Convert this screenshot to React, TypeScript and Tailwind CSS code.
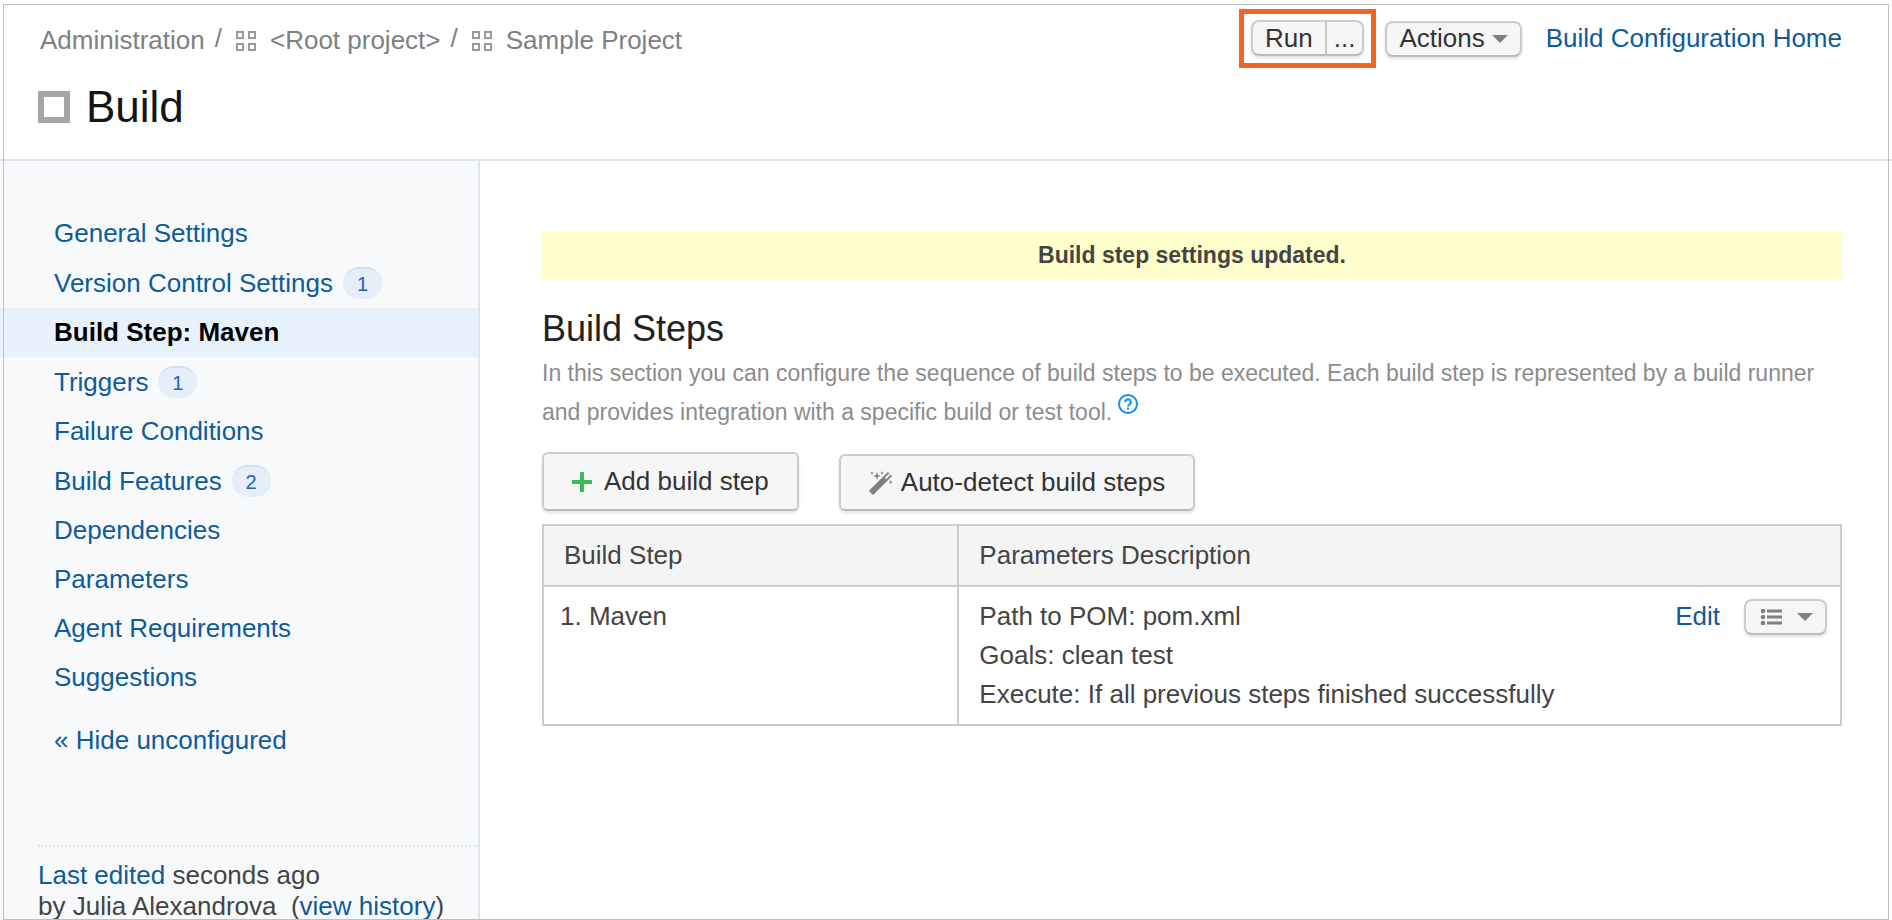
import type { ReactNode } from "react";
import clsx from "clsx";

type NavItem = { label: string; count?: number; active?: boolean };

const navItems: NavItem[] = [
  { label: "General Settings" },
  { label: "Version Control Settings", count: 1 },
  { label: "Build Step: Maven", active: true },
  { label: "Triggers", count: 1 },
  { label: "Failure Conditions" },
  { label: "Build Features", count: 2 },
  { label: "Dependencies" },
  { label: "Parameters" },
  { label: "Agent Requirements" },
  { label: "Suggestions" },
];

const ProjectIcon = () => (
  <svg className="h-5 w-5" viewBox="0 0 20 20" fill="none" stroke="#999" strokeWidth="2" aria-hidden="true">
    <rect x="1" y="1" width="6" height="6" />
    <rect x="13" y="1" width="6" height="6" />
    <rect x="1" y="13" width="6" height="6" />
    <rect x="13" y="13" width="6" height="6" />
  </svg>
);

const Caret = () => (
  <svg className="h-2 w-4" viewBox="0 0 16 8" aria-hidden="true">
    <path d="M0 0h16L8 8z" fill="#808080" />
  </svg>
);

const PlusIcon = () => (
  <svg className="h-5 w-5" viewBox="0 0 20 20" aria-hidden="true">
    <path d="M8 0h4v8h8v4h-8v8H8v-8H0V8h8z" fill="#3cb95d" />
  </svg>
);

const WandIcon = () => (
  <svg className="h-6 w-6" viewBox="0 0 24 24" aria-hidden="true">
    <path d="M2 22 21 3" stroke="#808080" strokeWidth="6" />
    <path d="M17.2 6.8 20.4 3.6" stroke="#f6f6f6" strokeWidth="2" strokeLinecap="round" />
    <path
      d="M8 1l1 3 3 1-3 1-1 3-1-3-3-1 3-1zM3 0l.6 1.4L5 2l-1.4.6L3 4l-.6-1.4L1 2l1.4-.6zM13 0l.6 1.4L15 2l-1.4.6L13 4l-.6-1.4L11 2l1.4-.6zM21.8 9.2l.6 1.4 1.4.6-1.4.6-.6 1.4-.6-1.4-1.4-.6 1.4-.6z"
      fill="#808080"
    />
  </svg>
);

const ListIcon = () => (
  <svg className="h-4 w-[22px]" viewBox="0 0 22 16" fill="#808080" aria-hidden="true">
    <circle cx="3" cy="2" r="2.3" />
    <circle cx="3" cy="8" r="2.3" />
    <circle cx="3" cy="14" r="2.3" />
    <path d="M7 .5h15v3H7zM7 6.5h15v3H7zM7 12.5h15v3H7z" />
  </svg>
);

const HelpIcon = () => (
  <svg
    className="mb-1.5 inline h-5 w-5 align-baseline"
    viewBox="0 0 20 20"
    fill="none"
    stroke="#0a8fff"
    strokeWidth="2"
    aria-hidden="true"
  >
    <circle cx="10" cy="10" r="9" />
    <path d="M7.2 8.2a2.8 2.8 0 1 1 4.2 2.4c-.9.5-1.4.9-1.4 1.8" />
    <path d="M10 13.6v2" />
  </svg>
);

const buttonLook =
  "flex items-center border-2 border-[#ccc] border-b-[#bbb] bg-[#f6f6f6] text-[#333] shadow-[0_2px_3px_rgba(0,0,0,0.12)]";

const Button = ({ className, children, label }: { className?: string; children: ReactNode; label?: string }) => (
  <button type="button" aria-label={label} className={clsx(buttonLook, className)}>
    {children}
  </button>
);

const Header = () => (
  <header className="flex justify-between border-b-2 border-[#dfe5eb] pr-[50px]">
    <div className="pt-[23px] pb-[27px] pl-[38px]">
      <nav aria-label="Breadcrumb" className="flex items-center pl-0.5 text-[#808080]">
        <a href="#admin">Administration</a>
        <span className="px-2.5 pb-1">/</span>
        <a href="#root" className="flex items-center gap-3.5 pl-1">
          <ProjectIcon />
          &lt;Root project&gt;
        </a>
        <span className="px-2.5 pb-1">/</span>
        <a href="#sample" className="flex items-center gap-3.5 pl-1">
          <ProjectIcon />
          Sample Project
        </a>
      </nav>
      <h1 className="mt-6 flex items-center gap-4 text-[44px] leading-[50px] text-[#151515]">
        <span className="h-8 w-8 border-6 border-[#a6a6a6]" />
        Build
      </h1>
    </div>
    <div className="flex items-center self-start pt-[9px]">
      <div className="flex border-5 border-[#f26522] px-[7px] pt-1.5 pb-[7px]">
        <Button className="h-9 rounded-l-lg px-3">Run</Button>
        <Button className="h-9 rounded-r-lg border-l-0 px-[7px]" label="Run custom build">
          ...
        </Button>
      </div>
      <Button className="ml-[9px] h-9 gap-[7px] rounded-lg px-3">
        Actions
        <Caret />
      </Button>
      <a href="#home" className="ml-6 text-[#0f5b99]">
        Build Configuration Home
      </a>
    </div>
  </header>
);

const Sidebar = () => (
  <aside className="w-[480px] shrink-0 border-r-2 border-[#dfe5eb] bg-[#f7f9fb] pt-12">
    <ul>
      {navItems.map(({ label, count, active }) => (
        <li key={label}>
          <a
            href="#settings"
            className={clsx(
              "flex items-center gap-2.5 py-[9px] pl-[54px]",
              active ? "bg-[#e7f2fd] font-bold text-black" : "text-[#0f5b99]"
            )}
          >
            {label}
            {count && (
              <span className="flex h-8 w-[39px] items-center justify-center rounded-full border-t-2 border-[#cfdff5] bg-[#e5eef9] text-xl text-[#2160c8]">
                {count}
              </span>
            )}
          </a>
        </li>
      ))}
    </ul>
    <a href="#hide" className="mt-3.5 block py-[9px] pl-[54px] text-[#0f5b99]">
      « Hide unconfigured
    </a>
    <div className="mt-20 ml-[38px] border-t-2 border-dotted border-[#dfe5eb] pt-[13px]">
      <p className="whitespace-nowrap">
        <a href="#edited" className="text-[#0f5b99]">Last edited</a> seconds ago
        <br />
        by Julia Alexandrova&nbsp; (<a href="#history" className="text-[#0f5b99]">view history</a>)
      </p>
    </div>
  </aside>
);

const StepsTable = () => (
  <table className="mt-[13px] w-full border-collapse text-left leading-[39px]">
    <thead>
      <tr className="bg-[#f4f4f4]">
        <th className="w-[32%] border-2 border-[#ccc] px-5 py-2.5 font-normal">Build Step</th>
        <th className="border-2 border-[#ccc] px-5 py-2.5 font-normal">Parameters Description</th>
      </tr>
    </thead>
    <tbody>
      <tr className="align-top">
        <td className="border-2 border-[#ccc] px-4 py-2.5">1. Maven</td>
        <td className="border-2 border-[#ccc] py-2.5 pr-[13px] pl-5">
          <div className="flex items-start justify-between">
            <div>
              <p>Path to POM: pom.xml</p>
              <p>Goals: clean test</p>
              <p>Execute: If all previous steps finished successfully</p>
            </div>
            <div className="flex items-center gap-6">
              <a href="#edit" className="text-[#0f5b99]">Edit</a>
              <Button className="h-9 gap-[15px] rounded-lg pr-3 pl-3.5" label="Step actions">
                <ListIcon />
                <Caret />
              </Button>
            </div>
          </div>
        </td>
      </tr>
    </tbody>
  </table>
);

const App = () => {
  return (
    <div className="relative flex h-screen flex-col overflow-hidden bg-white font-['Liberation_Sans',Arial,sans-serif] text-[26px] leading-[31px] text-[#444]">
      <Header />
      <div className="flex grow">
        <Sidebar />
        <main className="grow pt-[71px] pr-[50px] pl-[62px]">
          <p className="bg-[#ffffcc] py-2.5 text-center text-[23px] leading-[27px] font-bold">
            Build step settings updated.
          </p>
          <h2 className="mt-7 text-4xl leading-[44px] text-[#222]">Build Steps</h2>
          <p className="mt-[3px] text-[23px] leading-[39px] text-[#8c8c8c]">
            In this section you can configure the sequence of build steps to be executed. Each build step is
            represented by a build runner and provides integration with a specific build or test tool.
            <a href="#help" aria-label="Help" className="ml-1.5">
              <HelpIcon />
            </a>
          </p>
          <div className="mt-5 flex items-end gap-10">
            <Button className="h-[59px] gap-3 rounded-md px-7">
              <PlusIcon />
              Add build step
            </Button>
            <Button className="h-[57px] gap-2 rounded-md px-7">
              <WandIcon />
              Auto-detect build steps
            </Button>
          </div>
          <StepsTable />
        </main>
      </div>
      {/* thin frame drawn over the whole page */}
      <div className="pointer-events-none absolute inset-x-[3px] top-1 bottom-0 border border-[#bfbfbf]" />
    </div>
  );
};

export default App;
